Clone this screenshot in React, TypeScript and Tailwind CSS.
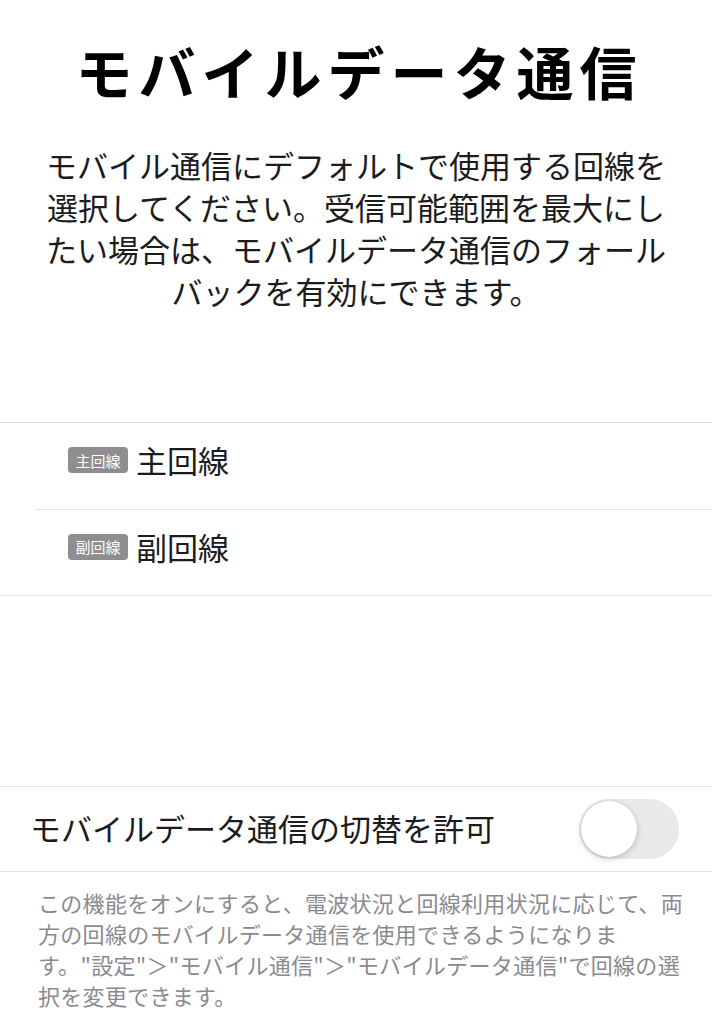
export default function App() {
  const jp = "font-['Noto_Sans_CJK_JP','Noto_Sans',sans-serif]"

  return (
    <div className={`min-h-screen w-[712px] bg-white text-black ${jp}`}>
      {/* Header */}
      <h1 className="pl-[6px] pt-[38px] text-center text-[57px] font-bold leading-[64px] tracking-[6px]">
        モバイルデータ通信
      </h1>
      <p className="mx-auto mt-[42px] w-[640px] text-center text-[31px] leading-[42px] text-[#1c1c1e]">
        モバイル通信にデフォルトで使用する回線を<br />
        選択してください。受信可能範囲を最大にし<br />
        たい場合は、モバイルデータ通信のフォール<br />
        バックを有効にできます。
      </p>

      {/* Line list */}
      <div className="mt-[110px] border-y border-[#e2e2e4]">
        <div className="flex h-[86px] items-center pb-[12px] pl-[68px]">
          <span className="flex h-[26px] w-[60px] items-center justify-center rounded-[4px] bg-[#8e8e90] text-[15px] leading-none text-white">
            主回線
          </span>
          <span className="ml-[8px] text-[31px] leading-[40px] text-[#1c1c1e]">主回線</span>
        </div>
        <div className="ml-[36px] h-px bg-[#e2e2e4]" />
        <div className="flex h-[85px] items-center pb-[12px] pl-[68px]">
          <span className="flex h-[26px] w-[60px] items-center justify-center rounded-[4px] bg-[#8e8e90] text-[15px] leading-none text-white">
            副回線
          </span>
          <span className="ml-[8px] text-[31px] leading-[40px] text-[#1c1c1e]">副回線</span>
        </div>
      </div>

      {/* Toggle row */}
      <div className="mt-[190px] flex h-[86px] items-center justify-between border-y border-[#e2e2e4] pl-[30px] pr-[33px]">
        <span className="pb-[2px] text-[31px] leading-[40px] text-[#1c1c1e]">モバイルデータ通信の切替を許可</span>
        <div className="flex h-[60px] w-[100px] items-center rounded-full bg-[#e9e9ea] p-[2px]">
          <div className="h-[56px] w-[56px] rounded-full bg-white shadow-[0_2px_6px_rgba(0,0,0,0.18),0_0_0_1px_rgba(0,0,0,0.04)]" />
        </div>
      </div>

      {/* Footer note */}
      <p className="whitespace-nowrap px-[38px] pt-[15px] text-[22px] leading-[31px] tracking-[0.3px] text-[#8a8a8e]">
        この機能をオンにすると、電波状況と回線利用状況に応じて、両<br />
        方の回線のモバイルデータ通信を使用できるようになりま<br />
        す。"設定"＞"モバイル通信"＞"モバイルデータ通信"で回線の選<br />
        択を変更できます。
      </p>
    </div>
  )
}
